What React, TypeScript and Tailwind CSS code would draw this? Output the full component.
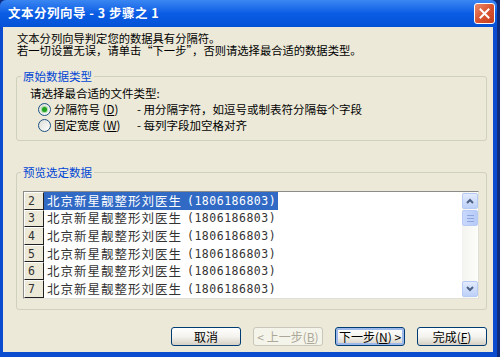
import React from "react";

function Radio({ checked }: { checked: boolean }) {
  return (
    <span className="relative inline-flex w-[13px] h-[13px] rounded-full border border-[#1C5180] bg-gradient-to-br from-[#DCDCD7] to-white items-center justify-center shrink-0">
      {checked && <span className="w-[5px] h-[5px] rounded-full bg-[#21A121] shadow-[0_0_1px_1px_rgba(80,200,80,0.5)]" />}
    </span>
  );
}

function Btn({ children, disabled, focused }: { children: React.ReactNode; disabled?: boolean; focused?: boolean }) {
  return (
    <div
      className={
        "w-[70px] h-[19px] rounded-[3px] border flex items-center justify-center text-[12px] leading-none " +
        (disabled
          ? "border-[#C9C7BA] text-[#ACA899] bg-[#F5F4EA]"
          : "border-[#003C74] text-black bg-gradient-to-b from-white via-[#F4F3EE] to-[#D6D0C5]") +
        (focused ? " shadow-[inset_0_0_0_2px_#9DB9EB]" : "")
      }
    >
      {children}
    </div>
  );
}

export default function App() {
  const rows = [2, 3, 4, 5, 6, 7];
  return (
    <div className="w-[500px] h-[357px] bg-[#0D2C7E] overflow-hidden font-['Noto_Sans_CJK_SC',sans-serif]">
      <div className="w-[497px] h-[357px] flex flex-col rounded-t-[6px] bg-[#0A4BD0]">
        <div className="h-[27px] shrink-0 flex items-center justify-between pl-[8px] pr-[2px] rounded-t-[6px] bg-gradient-to-b from-[#3A86F2] via-[#0A5CE4] to-[#0652D6]">
          <span className="text-white font-bold text-[12.5px] tracking-[0.5px] leading-none whitespace-pre">文本分列向导 - 3 步骤之 1</span>
          <div className="w-[21px] h-[21px] rounded-[3px] border border-white bg-gradient-to-br from-[#E98A6A] via-[#DA5430] to-[#C2401F] flex items-center justify-center">
            <svg width="11" height="11" viewBox="0 0 11 11">
              <path d="M1.5 1.5 L9.5 9.5 M9.5 1.5 L1.5 9.5" stroke="white" strokeWidth="2" strokeLinecap="square" />
            </svg>
          </div>
        </div>
        <div className="flex-1 ml-[3px] mr-[4px] mb-[5px] bg-[#ECE9D8] flex flex-col pl-[13px] pr-[6px] text-[11.5px] leading-[12px] text-black">
          <div className="pt-[5px] pl-[1px] text-[11.3px]">
            <div className="h-[12px] leading-[12px]">文本分列向导判定您的数据具有分隔符。</div>
            <div className="h-[12px] leading-[12px]">若一切设置无误，请单击“下一步”，否则请选择最合适的数据类型。</div>
          </div>

          <fieldset className="mt-[14px] border border-[#D0D0BF] rounded-[3px] pb-[8px]">
            <legend className="ml-[4px] px-[2px] text-[#0046D5]">原始数据类型</legend>
            <div className="ml-[13px] mt-[5px]">请选择最合适的文件类型:</div>
            <div className="ml-[21px] mt-[3px] h-[14px] flex items-center">
              <Radio checked />
              <span className="ml-[3px] w-[83px]">分隔符号 (<span className="underline">D</span>)</span>
              <span>- 用分隔字符，如逗号或制表符分隔每个字段</span>
            </div>
            <div className="ml-[21px] mt-[2px] h-[14px] flex items-center">
              <Radio checked={false} />
              <span className="ml-[3px] w-[83px]">固定宽度 (<span className="underline">W</span>)</span>
              <span>- 每列字段加空格对齐</span>
            </div>
          </fieldset>

          <fieldset className="mt-[25px] border border-[#D0D0BF] rounded-[3px] pb-[10px]">
            <legend className="ml-[4px] px-[2px] text-[#0046D5]">预览选定数据</legend>
            <div className="mt-[13px] mx-[6px] mr-[7px] h-[108px] border border-[#8C8C8C] border-b-[#E0DFD8] border-r-[#E0DFD8] bg-white flex">
              <div className="flex-1 flex flex-col">
                {rows.map((n) => (
                  <div key={n} className="h-[17.6px] flex items-stretch">
                    <div className="w-[20px] shrink-0 border-t border-l border-t-white border-l-white border-r border-b border-r-[#202020] border-b-[#202020] bg-[#ECE9D8] flex items-center pl-[3px] font-['DejaVu_Sans_Mono',monospace] text-[11.5px] text-[#333]">
                      {n}
                    </div>
                    <div className="flex items-center">
                      <span
                        className={
                          "h-full flex items-center pl-[3px] pr-[2px] " +
                          (n === 2 ? "bg-[#316AC5] text-white" : "text-[#333]")
                        }
                      >
                        <span className="text-[12.5px] tracking-[1px]">北京新星靓整形刘医生</span>
                        <span className="ml-[5px] font-['DejaVu_Sans_Mono',monospace] text-[11.5px] tracking-[0.5px]">(1806186803)</span>
                      </span>
                    </div>
                  </div>
                ))}
              </div>
              <div className="w-[16px] shrink-0 bg-gradient-to-r from-[#F3F3EF] to-[#FDFDFA] flex flex-col justify-between py-[1px]">
                <div>
                  <div className="h-[16px] rounded-[2px] border border-[#B7CAF5] bg-gradient-to-b from-[#E3EBFD] to-[#BCD0F8] flex items-center justify-center">
                    <svg width="8" height="6" viewBox="0 0 8 6">
                      <path d="M1 5 L4 2 L7 5" stroke="#4D6185" strokeWidth="2" fill="none" />
                    </svg>
                  </div>
                  <div className="h-[16px] mt-[1px] rounded-[2px] border border-[#B7CAF5] bg-gradient-to-r from-[#C9D8FC] to-[#B7CBF7] flex flex-col items-center justify-center gap-[2px]">
                    <div className="w-[7px] h-[1px] bg-[#8DA6DE]" />
                    <div className="w-[7px] h-[1px] bg-[#8DA6DE]" />
                    <div className="w-[7px] h-[1px] bg-[#8DA6DE]" />
                  </div>
                </div>
                <div className="h-[16px] rounded-[2px] border border-[#B7CAF5] bg-gradient-to-b from-[#E3EBFD] to-[#BCD0F8] flex items-center justify-center">
                  <svg width="8" height="6" viewBox="0 0 8 6">
                    <path d="M1 1 L4 4 L7 1" stroke="#4D6185" strokeWidth="2" fill="none" />
                  </svg>
                </div>
              </div>
            </div>
          </fieldset>

          <div className="mt-[17px] flex justify-end gap-[12px]">
            <Btn>取消</Btn>
            <Btn disabled>&lt; 上一步(<span className="underline">B</span>)</Btn>
            <Btn focused>下一步(<span className="underline">N</span>) &gt;</Btn>
            <Btn>完成(<span className="underline">F</span>)</Btn>
          </div>
        </div>
      </div>
    </div>
  );
}
